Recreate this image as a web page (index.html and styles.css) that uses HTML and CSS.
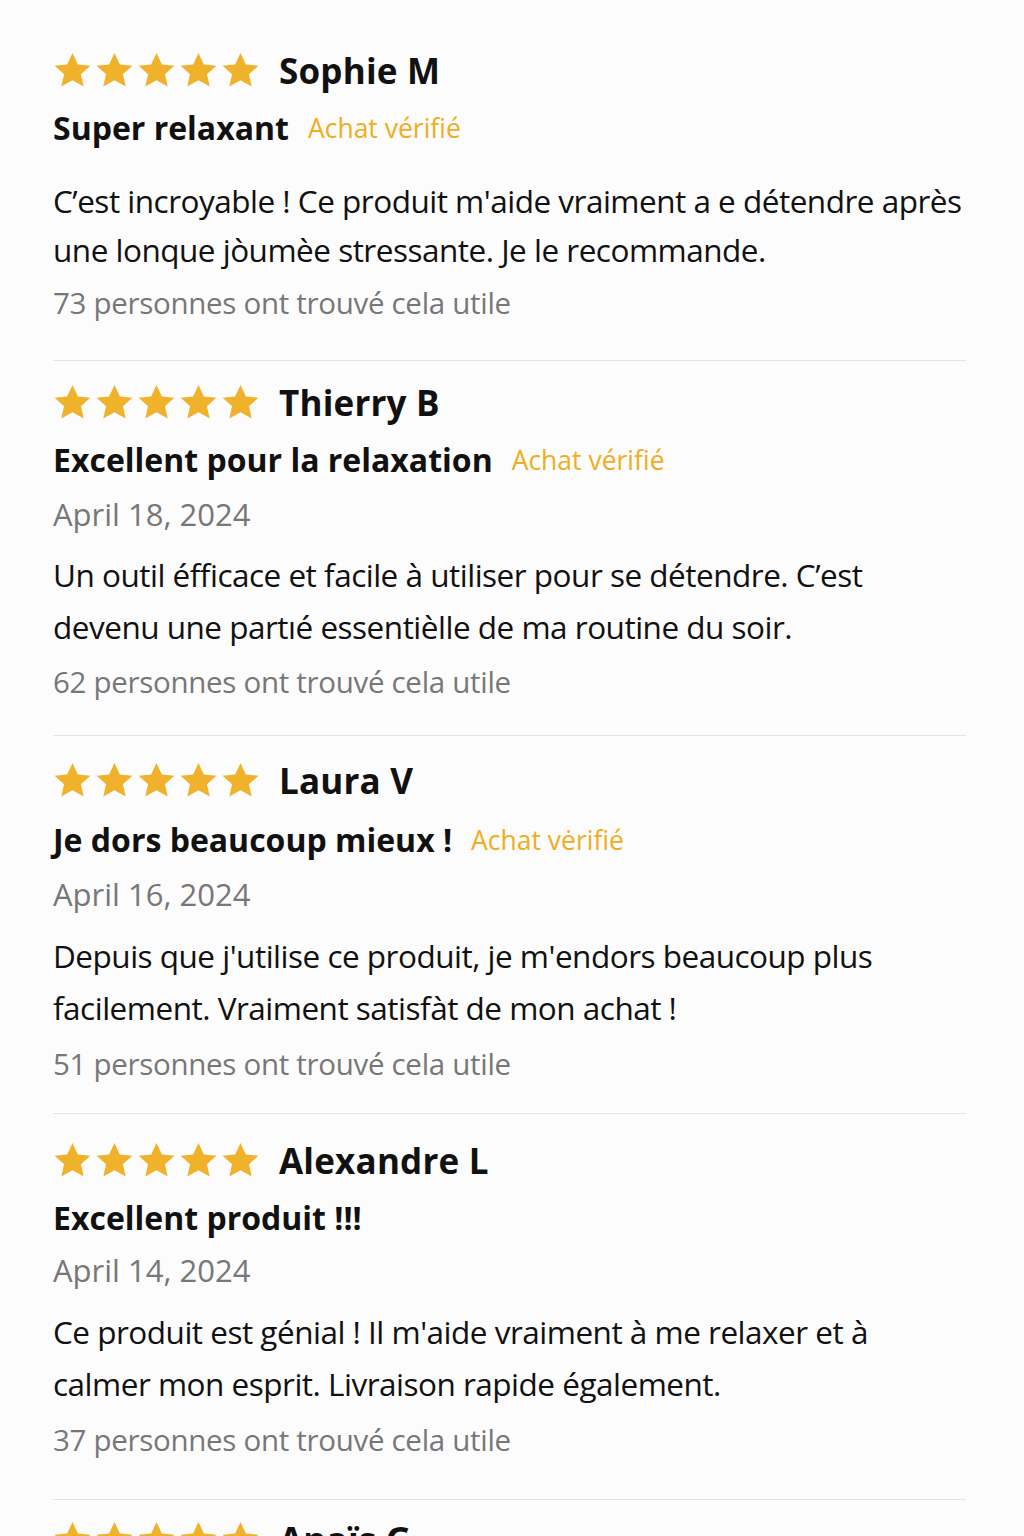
FILE: index.html
```html
<!DOCTYPE html>
<html lang="fr">
<head>
<meta charset="utf-8">
<link rel="stylesheet" href="styles.css">
</head>
<body>
<svg width="0" height="0" class="defs">
  <defs>
    <symbol id="star" viewBox="0 0 24 24">
      <path d="M12 1.2l3.3 7.1 7.7.8-5.8 5.2 1.7 7.6L12 18l-6.9 3.9 1.7-7.6L1 9.1l7.7-.8z"/>
    </symbol>
  </defs>
</svg>
<main class="reviews">
  <article class="review first">
    <div class="head">
      <div class="stars"><svg><use href="#star"/></svg><svg><use href="#star"/></svg><svg><use href="#star"/></svg><svg><use href="#star"/></svg><svg><use href="#star"/></svg></div>
      <span class="name">Sophie M</span>
    </div>
    <div class="title-row"><span class="title">Super relaxant</span><span class="verified">Achat vérifié</span></div>
    <p class="body">C’est incroyable ! Ce produit m'aide vraiment a e détendre après<br>une lonque jòumèe stressante. Je le recommande.</p>
    <p class="helpful">73 personnes ont trouvé cela utile</p>
  </article>
  <article class="review">
    <div class="head">
      <div class="stars"><svg><use href="#star"/></svg><svg><use href="#star"/></svg><svg><use href="#star"/></svg><svg><use href="#star"/></svg><svg><use href="#star"/></svg></div>
      <span class="name">Thierry B</span>
    </div>
    <div class="title-row"><span class="title">Excellent pour la relaxation</span><span class="verified">Achat vérifié</span></div>
    <p class="date">April 18, 2024</p>
    <p class="body">Un outil éfficace et facile à utiliser pour se détendre. C’est<br>devenu une partıé essentièlle de ma routine du soir.</p>
    <p class="helpful">62 personnes ont trouvé cela utile</p>
  </article>
  <article class="review airy">
    <div class="head">
      <div class="stars"><svg><use href="#star"/></svg><svg><use href="#star"/></svg><svg><use href="#star"/></svg><svg><use href="#star"/></svg><svg><use href="#star"/></svg></div>
      <span class="name">Laura V</span>
    </div>
    <div class="title-row"><span class="title">Je dors beaucoup mieux !</span><span class="verified">Achat vėrifié</span></div>
    <p class="date">April 16, 2024</p>
    <p class="body">Depuis que j'utilise ce produit, je m'endors beaucoup plus<br>facilement. Vraiment satisfàt de mon achat !</p>
    <p class="helpful">51 personnes ont trouvé cela utile</p>
  </article>
  <article class="review roomy">
    <div class="head">
      <div class="stars"><svg><use href="#star"/></svg><svg><use href="#star"/></svg><svg><use href="#star"/></svg><svg><use href="#star"/></svg><svg><use href="#star"/></svg></div>
      <span class="name">Alexandre L</span>
    </div>
    <div class="title-row"><span class="title">Excellent produit !!!</span></div>
    <p class="date">April 14, 2024</p>
    <p class="body">Ce produit est génial ! Il m'aide vraiment à me relaxer et à<br>calmer mon esprit. Livraison rapide également.</p>
    <p class="helpful">37 personnes ont trouvé cela utile</p>
  </article>
  <article class="review last">
    <div class="head">
      <div class="stars"><svg><use href="#star"/></svg><svg><use href="#star"/></svg><svg><use href="#star"/></svg><svg><use href="#star"/></svg><svg><use href="#star"/></svg></div>
      <span class="name">Anaïs G</span>
    </div>
  </article>
</main>
</body>
</html>
```

FILE: styles.css
```css
html, body {
  margin: 0;
  padding: 0;
  background: #fcfcfc;
}
body {
  font-family: "Open Sans", "Noto Sans", sans-serif;
  color: #111;
  overflow: hidden;
  height: 1536px;
}
.defs { position: absolute; }
.reviews {
  padding: 25px 58px 0 53px;
}
.review {
  padding: 16px 0 27px;
  border-bottom: 1px solid #e4e4e4;
}
.review.first { padding: 20px 0 31px; }
.review.airy { padding: 19px 0 23px; }
.review.airy .title-row { margin-top: 9px; }
.review.airy .body,
.review.roomy .body { margin-top: 10px; }
.review.airy .helpful,
.review.roomy .helpful { margin-top: 4px; }
.review.roomy { padding: 21px 0 33px; }
.review.last { padding-top: 14px; border-bottom: 0; }
.head {
  display: flex;
  align-items: center;
  height: 50px;
}
.stars {
  display: flex;
  gap: 3px;
  margin-right: 19px;
}
.stars svg {
  width: 39px;
  height: 39px;
  fill: #f0b12b;
}
.name {
  font-weight: 700;
  font-size: 35px;
  letter-spacing: 0.2px;
  color: #111;
}
.title-row {
  display: flex;
  align-items: baseline;
  gap: 19px;
  margin-top: 7px;
  line-height: 52px;
}
.title {
  font-weight: 700;
  font-size: 32px;
  color: #111;
}
.verified {
  font-size: 26.5px;
  color: #efad22;
  position: relative;
  top: -2px;
}
.date {
  margin: 0;
  font-size: 31px;
  line-height: 52px;
  color: #777;
}
.body {
  margin: 9px 0 0;
  font-size: 31.5px;
  line-height: 52px;
  color: #111;
  letter-spacing: -0.5px;
  white-space: nowrap;
}
.first .body {
  margin-top: 20px;
  line-height: 49px;
}
.helpful {
  margin: 3px 0 0;
  font-size: 29.5px;
  line-height: 52px;
  color: #777;
  letter-spacing: -0.3px;
}
```
